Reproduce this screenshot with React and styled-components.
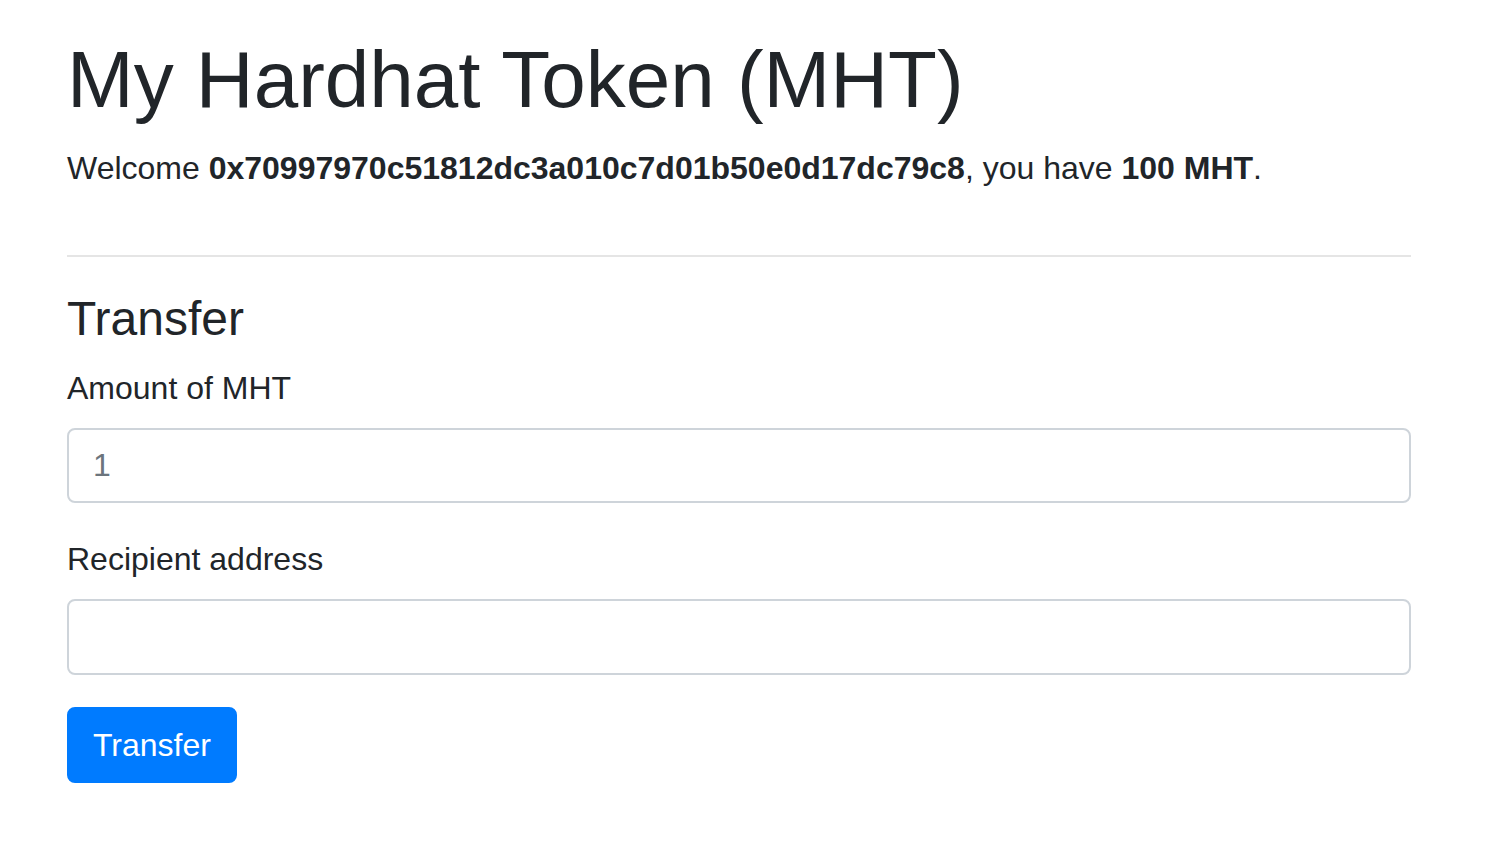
import React, { useState } from 'react'
import styled, { createGlobalStyle } from 'styled-components';

const GlobalStyle = createGlobalStyle`
    * {
        box-sizing: border-box;
    }
    body {
        margin: 0;
        background: #ffffff;
        color: #212529;
        font-family: "Liberation Sans", Arial, sans-serif;
        font-size: 32px;
        line-height: 1.5;
    }
`

const App = () => {
    const [amount, setAmount] = useState('')
    const [recipient, setRecipient] = useState('')

    return (
        <>
            <GlobalStyle />
            <Container>
                <Intro>
                    <Title>My Hardhat Token (MHT)</Title>
                    <Welcome>
                        Welcome <b>0x70997970c51812dc3a010c7d01b50e0d17dc79c8</b>, you have <b>100 MHT</b>.
                    </Welcome>
                </Intro>

                <Divider />

                <Form onSubmit={e => e.preventDefault()}>
                    <SectionTitle>Transfer</SectionTitle>
                    <FormGroup>
                        <Label>Amount of MHT</Label>
                        <Input type="number" step="1" placeholder="1"
                            value={amount} onChange={e => setAmount(e.target.value)} />
                    </FormGroup>
                    <FormGroup>
                        <Label>Recipient address</Label>
                        <Input type="text"
                            value={recipient} onChange={e => setRecipient(e.target.value)} />
                    </FormGroup>
                    <PrimaryButton type="submit">Transfer</PrimaryButton>
                </Form>
            </Container>
        </>
    )
}

const Container = styled.div`
    padding: 32px 74px 48px 67px;
`

const Intro = styled.div`
    display: flow-root;
`

const Title = styled.h1`
    margin: 0 0 16px;
    font-size: 80px;
    font-weight: 500;
    line-height: 1.2;
`

const Welcome = styled.p`
    margin: 0 0 32px;

    b {
        font-weight: 700;
    }
`

const Divider = styled.hr`
    margin: 31px 0 33px;
    border: 0;
    border-top: 2px solid rgba(0, 0, 0, 0.1);
`

const Form = styled.form`
    display: flow-root;
`

const SectionTitle = styled.h4`
    margin: 0 0 16px;
    font-size: 48px;
    font-weight: 500;
    line-height: 1.2;
`

const FormGroup = styled.div`
    margin-bottom: 32px;
`

const Label = styled.label`
    display: inline-block;
    margin-bottom: 16px;
`

const Input = styled.input`
    display: block;
    width: 100%;
    height: 75.5px;
    padding: 12px 24px;
    font-family: inherit;
    font-size: 32px;
    line-height: 1.5;
    color: #495057;
    background: #ffffff;
    border: 2px solid #ced4da;
    border-radius: 8px;
    outline: none;
    -moz-appearance: textfield;

    &::placeholder {
        color: #6c757d;
        opacity: 1;
    }

    &::-webkit-outer-spin-button,
    &::-webkit-inner-spin-button {
        -webkit-appearance: none;
        margin: 0;
    }
`

const PrimaryButton = styled.button`
    display: inline-block;
    height: 76px;
    padding: 12px 24px;
    font-family: inherit;
    font-size: 32px;
    line-height: 1.5;
    color: #ffffff;
    background: #007bff;
    border: 2px solid #007bff;
    border-radius: 8px;
    cursor: pointer;
`

export default App
